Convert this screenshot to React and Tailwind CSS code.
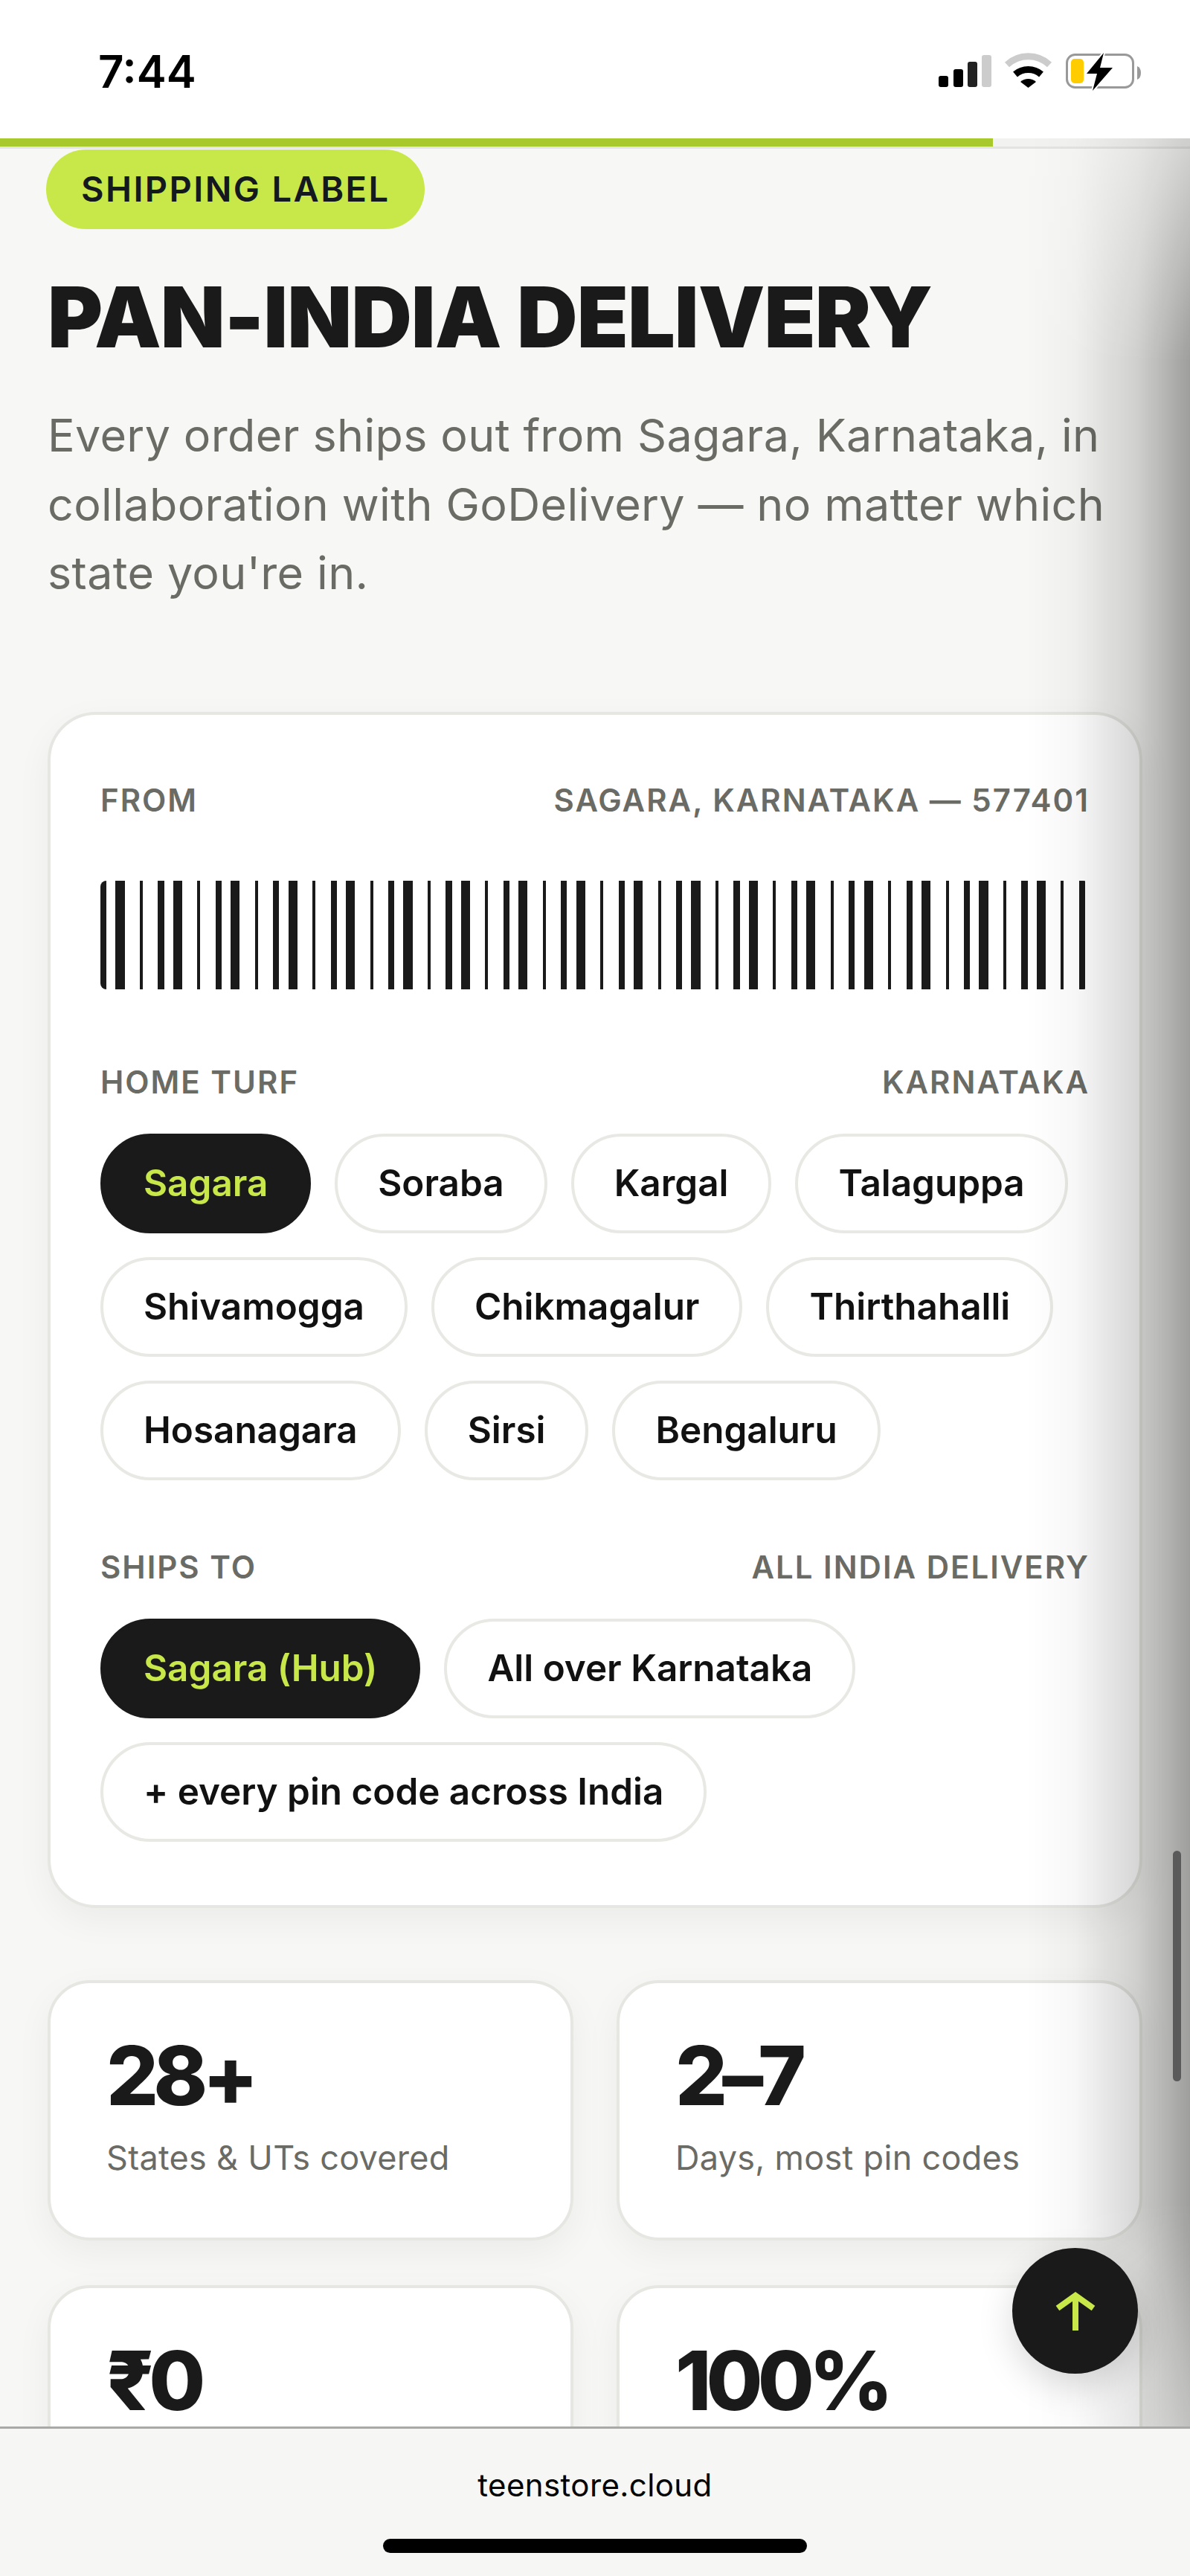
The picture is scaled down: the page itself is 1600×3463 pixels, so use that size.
import React from "react";

const LIME = "#c8e84a";

function Chip({ children, active }) {
  return (
    <span
      className={
        active
          ? "flex h-[134px] items-center rounded-full border-[4px] border-[#1a1a1a] bg-[#1a1a1a] px-[54px] text-[49.4px] font-semibold text-[#c8e84a]"
          : "flex h-[134px] items-center rounded-full border-[4px] border-[#e8e8e4] bg-white px-[54px] text-[49.4px] font-semibold text-[#111111]"
      }
    >
      {children}
    </span>
  );
}

function LabelRow({ left, right, className }) {
  return (
    <div className={"flex items-center justify-between text-[42px] font-semibold leading-[52px] tracking-[2px] text-[#6b6b66] " + (className || "")}>
      <span>{left}</span>
      <span>{right}</span>
    </div>
  );
}

function Stat({ value, label }) {
  return (
    <div className="h-[350px] rounded-[57px] border-[4px] border-[#e6e6e2] bg-white px-[75px] pt-[64px] shadow-[0_16px_48px_rgba(0,0,0,0.05)]">
      <div className="text-[110px] font-extrabold leading-[120px] tracking-[-7px] text-[#1a1a1a]">{value}</div>
      {label ? <div className="mt-[21px] text-[45px] font-normal leading-[60px] tracking-[0.3px] text-[#6b6b66]">{label}</div> : null}
    </div>
  );
}

export default function App() {
  return (
    <div className="relative flex h-[3463px] w-[1600px] flex-col overflow-hidden bg-[#f7f7f5] font-['Inter',sans-serif]">
      {/* status bar */}
      <div className="relative h-[186px] shrink-0 bg-white">
        <span className="absolute left-[132px] top-[60px] text-[60px] font-semibold leading-[72px] text-black">7:44</span>
        <svg className="absolute left-[1250px] top-[60px]" width="300" height="70" viewBox="1250 60 300 70">
          <rect x="1262" y="102" width="13" height="15" rx="3" fill="#000" />
          <rect x="1282" y="93" width="13" height="24" rx="3" fill="#000" />
          <rect x="1301" y="83" width="13" height="34" rx="3" fill="#222" />
          <rect x="1320" y="74" width="13" height="43" rx="3" fill="#ccc" />
          <path d="M1354 87 A42 42 0 0 1 1411 87" fill="none" stroke="#ccc" strokeWidth="9" />
          <path d="M1365 100 A27 27 0 0 1 1400 100" fill="none" stroke="#000" strokeWidth="9" />
          <path d="M1372 110 L1382.5 118 L1393 110 A16 16 0 0 0 1372 110 Z" fill="#000" />
          <rect x="1434.5" y="73.5" width="89" height="44" rx="11" fill="none" stroke="#999" strokeWidth="3" />
          <rect x="1440" y="79" width="17" height="33" rx="5" fill="#ffcc00" />
          <path d="M1529 89 Q1534 91 1534 98 Q1534 105 1529 107 Z" fill="#999" />
          <path d="M1484 71 L1461 99 L1475 99 L1469 122 L1496 91 L1479 91 Z" fill="#000" stroke="#fff" strokeWidth="4" paintOrder="stroke" />
        </svg>
      </div>

      {/* progress */}
      <div className="h-[11px] shrink-0 bg-[#f2f2f0]">
        <div className="h-full w-[1335px] bg-[#a8c92c]" />
      </div>
      <div className="h-[3px] shrink-0 bg-[#e4e4e2]" />

      {/* content */}
      <div className="min-h-0 flex-1 overflow-hidden px-[64px]">
        <div className="ml-[-2px] mt-[1px] flex h-[107px] w-fit items-center rounded-full bg-[#c8e84a] px-[47px] text-[47px] font-semibold tracking-[2.4px] text-[#14181f]">
          SHIPPING LABEL
        </div>
        <h1 className="mt-[43px] text-[113px] font-black leading-[150px] tracking-[-1px] text-[#1a1a1a]">PAN-INDIA DELIVERY</h1>
        <p className="mt-[38px] w-[1490px] text-[61px] font-normal leading-[92.5px] tracking-[0.35px] text-[#6b6b66]">
          Every order ships out from Sagara, Karnataka, in collaboration with GoDelivery — no matter which state you're in.
        </p>

        {/* label card */}
        <div className="mt-[140px] h-[1608px] rounded-[65px] border-[4px] border-[#e6e6e2] bg-white px-[67px] pt-[89px] shadow-[0_16px_48px_rgba(0,0,0,0.05)]">
          <LabelRow left="FROM" right="SAGARA, KARNATAKA — 577401" />
          <div className="mt-[82px] h-[146px] rounded-[8px] bg-[repeating-linear-gradient(90deg,#1a1a1a_0,#1a1a1a_8.14px,transparent_8.14px,transparent_20.35px,#1a1a1a_20.35px,#1a1a1a_32.56px,transparent_32.56px,transparent_52.9px,#1a1a1a_52.9px,#1a1a1a_57px,transparent_57px,transparent_77.4px)]" />

          <LabelRow left="HOME TURF" right="KARNATAKA" className="mt-[99px]" />
          <div className="mt-[43px] flex flex-wrap gap-[32px]">
            <Chip active>Sagara</Chip>
            <Chip>Soraba</Chip>
            <Chip>Kargal</Chip>
            <Chip>Talaguppa</Chip>
            <Chip>Shivamogga</Chip>
            <Chip>Chikmagalur</Chip>
            <Chip>Thirthahalli</Chip>
            <Chip>Hosanagara</Chip>
            <Chip>Sirsi</Chip>
            <Chip>Bengaluru</Chip>
          </div>

          <LabelRow left="SHIPS TO" right="ALL INDIA DELIVERY" className="mt-[91px]" />
          <div className="mt-[43px] flex flex-wrap gap-[32px]">
            <Chip active>Sagara (Hub)</Chip>
            <Chip>All over Karnataka</Chip>
            <Chip>+ every pin code across India</Chip>
          </div>
        </div>

        {/* stats */}
        <div className="mt-[97px] grid grid-cols-2 gap-x-[58px] gap-y-[60px]">
          <Stat value="28+" label="States & UTs covered" />
          <Stat value="2–7" label="Days, most pin codes" />
          <Stat value="₹0" />
          <Stat value="100%" />
        </div>
      </div>

      {/* browser bottom bar */}
      <div className="relative z-10 flex h-[201px] shrink-0 flex-col items-center border-t-[3px] border-[#a9a9a7] bg-[#f6f6f4]">
        <span className="mt-[50px] text-[42px] font-normal leading-[52px] tracking-[0.4px] text-black">teenstore.cloud</span>
        <div className="mt-[46px] h-[19px] w-[570px] rounded-full bg-black" />
      </div>

      {/* edge shadow */}
      <div className="pointer-events-none absolute bottom-[201px] right-0 top-[186px] w-[220px] bg-[linear-gradient(90deg,rgba(0,0,0,0)_0%,rgba(0,0,0,0.03)_30%,rgba(0,0,0,0.16)_68%,rgba(0,0,0,0.36)_100%)] [mask-image:linear-gradient(180deg,rgba(0,0,0,0.4)_0,#000_300px,#000_calc(100%-300px),rgba(0,0,0,0.6)_100%)]" />

      {/* scrollbar */}
      <div className="absolute left-[1577px] top-[2488px] h-[310px] w-[11px] rounded-full bg-[#5a5a5a]" />

      {/* back to top */}
      <button className="absolute left-[1361px] top-[3022px] z-20 flex h-[169px] w-[169px] items-center justify-center rounded-full bg-[#1a1a1a] shadow-[0_16px_48px_rgba(0,0,0,0.15)]">
        <svg width="54" height="52" viewBox="0 0 54 52">
          <path d="M27 52 V5 M3 22 L27 5 L51 22" fill="none" stroke={LIME} strokeWidth="8" />
        </svg>
      </button>
    </div>
  );
}
